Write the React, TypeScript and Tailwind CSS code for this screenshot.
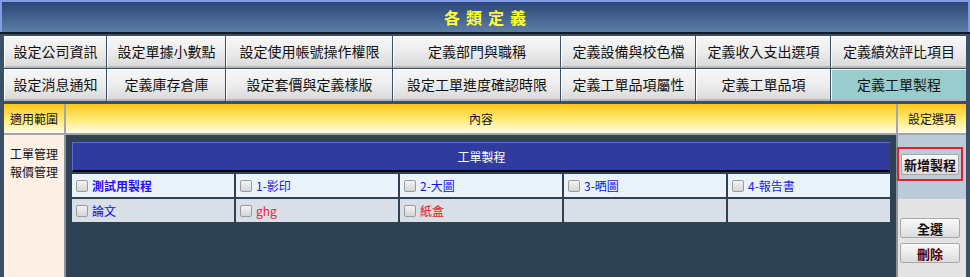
const font = "font-['Noto_Sans_CJK_TC','Noto_Sans',sans-serif]";

const tabRows = [
  ["設定公司資訊", "設定單據小數點", "設定使用帳號操作權限", "定義部門與職稱", "定義設備與校色檔", "定義收入支出選項", "定義績效評比項目"],
  ["設定消息通知", "定義庫存倉庫", "設定套價與定義樣版", "設定工單進度確認時限", "定義工單品項屬性", "定義工單品項", "定義工單製程"],
];

type Item = { label: string; color: string; bold?: boolean } | null;

const items: Item[] = [
  { label: "測試用製程", color: "text-[#2a10e8]", bold: true },
  { label: "1-影印", color: "text-[#2020e0]" },
  { label: "2-大圖", color: "text-[#1010e8]" },
  { label: "3-晒圖", color: "text-[#1010e8]" },
  { label: "4-報告書", color: "text-[#2020e0]" },
  { label: "論文", color: "text-[#0a0ae8]" },
  { label: "ghg", color: "text-[#f0203a]" },
  { label: "紙盒", color: "text-[#f01010]" },
  null,
  null,
];

const Check = () => (
  <span className="w-[12px] h-[12px] shrink-0 rounded-[2px] border border-[#9a9a9a] bg-gradient-to-b from-[#f4f4f4] to-[#d6d6d6]" />
);

const Tab = ({ label, active }: { label: string; active: boolean }) => (
  <div
    className={`flex items-center justify-center text-[14px] text-[#111] border-t border-l border-white border-b-2 border-b-[#b8b8b8] ${
      active ? "bg-[#99cccc]" : "bg-gradient-to-b from-[#f6f6f6] via-[#ededed] to-[#dadada]"
    }`}
  >
    {label}
  </div>
);

export default function App() {
  return (
    <div className={`w-[970px] h-[277px] overflow-hidden bg-[#3a5068] ${font}`}>
      <div className="h-[32px] border-2 border-b-0 border-[#7e9de2] bg-gradient-to-b from-[#2b4675] to-[#5e7ea8] flex items-center justify-center">
        <span className="text-[16px] font-bold tracking-[6px] text-[#ffff33] pl-[6px]">各類定義</span>
      </div>
      <div className="h-[2px] bg-[#121a28]" />

      <div className="pl-[4px] pt-[2px] flex flex-col gap-[1px]">
        {tabRows.map((row, r) => (
          <div
            key={r}
            className="grid grid-cols-[102px_118px_166px_167px_134px_134px_135px] gap-[1px] h-[32px]"
          >
            {row.map((t) => (
              <Tab key={t} label={t} active={t === "定義工單製程"} />
            ))}
          </div>
        ))}
      </div>

      <div className="mt-[3px] ml-[4px] mr-[4px] flex flex-col">
        <div className="flex gap-[2px] bg-[#a0a6ac] h-[31px] border-b-[2px] border-[#a0a6ac]">
          {["適用範圍", "內容", "設定選項"].map((h, i) => (
            <div
              key={h}
              className={`flex items-center justify-center text-[12px] text-[#111] bg-gradient-to-b from-[#fcc600] via-[#fee96a] to-[#fffbe4] ${
                i === 0 ? "w-[60px]" : i === 1 ? "w-[830px]" : "w-[68px]"
              }`}
            >
              {h}
            </div>
          ))}
        </div>

        <div className="flex gap-[2px] bg-[#8c939a] h-[150px]">
          <div className="w-[60px] bg-[#fdf0e7] pt-[10px] pl-[6px] text-[12px] leading-[18px] text-[#111]">
            <div>工單管理</div>
            <div>報價管理</div>
          </div>

          <div className="w-[830px] bg-[#2f4254] pt-[7px] pl-[6px]">
            <div className="w-[818px] h-[30px] bg-[#2f3c9e] border-t border-l border-[#5b66e0] border-b-[2px] border-b-black flex items-center justify-center text-[12px] text-white">
              工單製程
            </div>
            <div className="w-[818px] mt-[2px] grid grid-cols-5 gap-[2px] bg-[#2f4254]">
              {items.map((it, i) => (
                <div
                  key={i}
                  className={`flex items-center gap-[4px] pl-[4px] text-[12px] ${
                    i < 5 ? "h-[23px] bg-[#eaf3fa]" : "h-[23px] bg-[#d8dfe6]"
                  }`}
                >
                  {it && (
                    <>
                      <Check />
                      <span className={`${it.color} ${it.bold ? "font-bold" : ""}`}>{it.label}</span>
                    </>
                  )}
                </div>
              ))}
            </div>
          </div>

          <div className="w-[68px] flex flex-col">
            <div className="h-[64px] bg-[#bccbda] pt-[12px]">
              <div className="-ml-[1px] w-[66px] h-[34px] border-2 border-[#e0202a] flex items-center justify-center">
                <button className="w-[58px] h-[21px] rounded-[2px] border border-[#a8a8a8] bg-gradient-to-b from-[#fafafa] to-[#dcdcdc] text-[13px] font-bold text-[#1a0a0a] leading-none">
                  新增製程
                </button>
              </div>
            </div>
            <div className="flex-1 bg-[#e4e4e4] flex flex-col items-center pt-[19px] gap-[5px] pr-[4px]">
              <button className="w-[60px] h-[20px] rounded-[2px] border border-[#a8a8a8] bg-gradient-to-b from-[#fafafa] to-[#dcdcdc] text-[13px] font-bold text-[#111] leading-none">
                全選
              </button>
              <button className="w-[60px] h-[20px] rounded-[2px] border border-[#a8a8a8] bg-gradient-to-b from-[#fafafa] to-[#dcdcdc] text-[13px] font-bold text-[#500000] leading-none">
                刪除
              </button>
            </div>
          </div>
        </div>
      </div>
    </div>
  );
}
